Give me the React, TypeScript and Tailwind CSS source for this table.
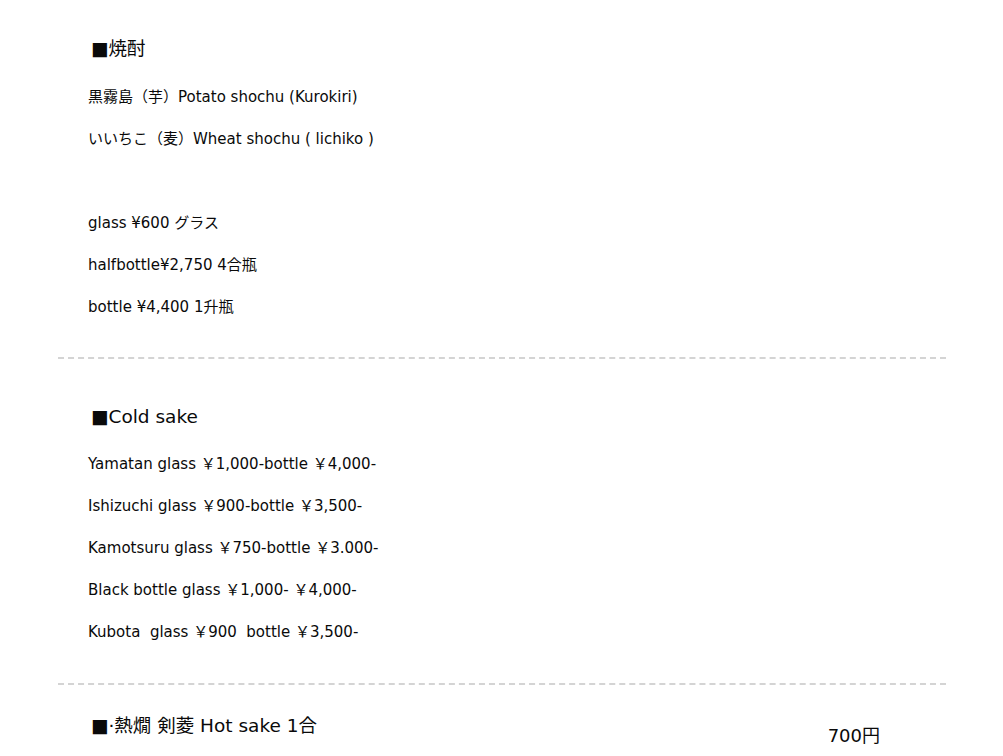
const FONT = "font-['DejaVu_Sans','Noto_Sans_CJK_JP',sans-serif]";

const SHOCHU = [
  "黒霧島（芋）Potato shochu (Kurokiri)",
  "いいちこ（麦）Wheat shochu ( lichiko )",
  "",
  "glass ¥600 グラス",
  "halfbottle¥2,750 4合瓶",
  "bottle ¥4,400 1升瓶",
];

const COLD = [
  "Yamatan glass ￥1,000-bottle ￥4,000-",
  "Ishizuchi glass ￥900-bottle ￥3,500-",
  "Kamotsuru glass ￥750-bottle ￥3.000-",
  "Black bottle glass ￥1,000- ￥4,000-",
  "Kubota  glass ￥900  bottle ￥3,500-",
];

function Lines({ items }: { items: string[] }) {
  return (
    <div className="pl-[30px]">
      {items.map((t, i) => (
        <p key={i} className="h-[42px] leading-[42px] text-[15px] whitespace-pre">{t}</p>
      ))}
    </div>
  );
}

export default function App() {
  return (
    <div className={`${FONT} bg-white text-[#0a0a0a] w-[1003px] h-[756px] overflow-hidden`}>
      <div className="mx-[58px] w-[888px]">
        {/* 焼酎 */}
        <section className="pt-[37px] pb-[29px]">
          <h3 className="pl-[33px] text-[18.5px] leading-[24px] mb-[15px]">■焼酎</h3>
          <Lines items={SHOCHU} />
        </section>
        <div className="border-t-2 border-dashed border-[#d4d4d4]" />

        <section className="pt-[46px] pb-[30px]">
          <h3 className="pl-[33px] text-[18.5px] leading-[24px] mb-[14px]">■Cold sake</h3>
          <Lines items={COLD} />
        </section>
        <div className="border-t-2 border-dashed border-[#d4d4d4]" />

        <section className="pt-[29px] flex items-start">
          <h3 className="pl-[33px] text-[18.5px] leading-[24px] flex-1">■·熱燗 剣菱 Hot sake 1合</h3>
          <span className="text-[18px] leading-[24px] mt-[10px] mr-[66px]">700円</span>
        </section>
      </div>
    </div>
  );
}
